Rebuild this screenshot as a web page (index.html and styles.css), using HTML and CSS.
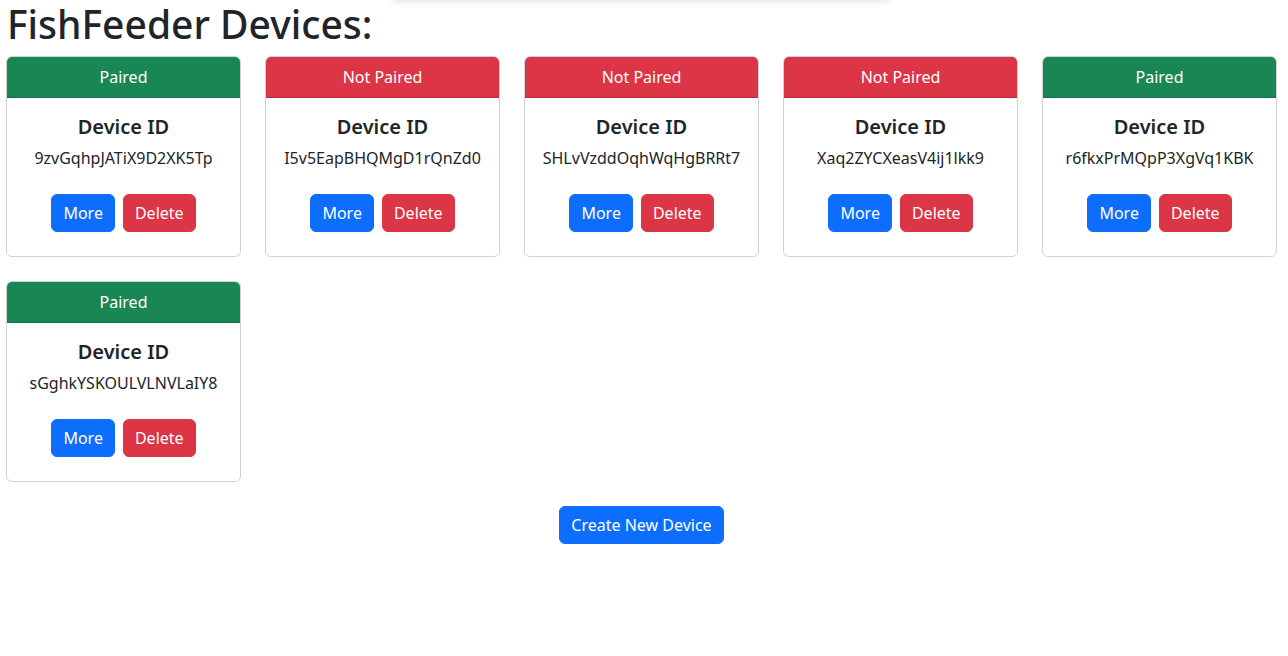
FILE: index.html
```html
<!DOCTYPE html>
<html>
<head>
<meta charset="utf-8">
<link rel="stylesheet" href="styles.css">
</head>
<body>
<div class="topshade"></div>
<div class="page">
  <h1 class="title">FishFeeder Devices:</h1>
  <div class="grid">
    <div class="card"><div class="card-header paired">Paired</div><div class="card-body"><h5 class="card-title">Device ID</h5><p class="card-text">9zvGqhpJATiX9D2XK5Tp</p><div class="actions"><button class="btn btn-blue">More</button><button class="btn btn-red">Delete</button></div></div></div>
    <div class="card"><div class="card-header notpaired">Not Paired</div><div class="card-body"><h5 class="card-title">Device ID</h5><p class="card-text">I5v5EapBHQMgD1rQnZd0</p><div class="actions"><button class="btn btn-blue">More</button><button class="btn btn-red">Delete</button></div></div></div>
    <div class="card"><div class="card-header notpaired">Not Paired</div><div class="card-body"><h5 class="card-title">Device ID</h5><p class="card-text">SHLvVzddOqhWqHgBRRt7</p><div class="actions"><button class="btn btn-blue">More</button><button class="btn btn-red">Delete</button></div></div></div>
    <div class="card"><div class="card-header notpaired">Not Paired</div><div class="card-body"><h5 class="card-title">Device ID</h5><p class="card-text">Xaq2ZYCXeasV4ij1lkk9</p><div class="actions"><button class="btn btn-blue">More</button><button class="btn btn-red">Delete</button></div></div></div>
    <div class="card"><div class="card-header paired">Paired</div><div class="card-body"><h5 class="card-title">Device ID</h5><p class="card-text">r6fkxPrMQpP3XgVq1KBK</p><div class="actions"><button class="btn btn-blue">More</button><button class="btn btn-red">Delete</button></div></div></div>
    <div class="card"><div class="card-header paired">Paired</div><div class="card-body"><h5 class="card-title">Device ID</h5><p class="card-text">sGghkYSKOULVLNVLaIY8</p><div class="actions"><button class="btn btn-blue">More</button><button class="btn btn-red">Delete</button></div></div></div>
  </div>
  <div class="create"><button class="btn btn-blue">Create New Device</button></div>
</div>
</body>
</html>
```
FILE: styles.css
```css
* { box-sizing: border-box; }
html, body { margin: 0; padding: 0; background: #fff; }
body {
  font-family: "Noto Sans", "Open Sans", sans-serif;
  font-size: 16px;
  line-height: 24px;
  color: #212529;
}
.topshade {
  position: absolute;
  left: 392px;
  top: -20px;
  width: 498px;
  height: 20px;
  box-shadow: 0 2px 6px rgba(0,0,0,0.10);
}
.page { padding: 0 11px 0 6px; }
.title {
  margin: 0 0 8px 0;
  font-size: 39px;
  line-height: 48px;
  font-weight: 500;
  padding-left: 1px;
}
.grid {
  display: grid;
  grid-template-columns: repeat(5, 235px);
  column-gap: 24px;
  row-gap: 24px;
}
.card {
  border: 1px solid rgba(0,0,0,0.175);
  border-radius: 6px;
  overflow: hidden;
  text-align: center;
}
.card-header {
  padding: 8px 16px;
  color: #fff;
  border-bottom: 1px solid rgba(0,0,0,0.175);
}
.paired { background: #198754; }
.notpaired { background: #dc3545; }
.card-body { padding: 17px 16px 24px; }
.card-title {
  margin: 0 0 7px 0;
  font-size: 20px;
  line-height: 24px;
  font-weight: 600;
}
.card-text { margin: 0 0 24px 0; }
.actions { display: flex; justify-content: center; gap: 8px; }
.btn {
  font-family: inherit;
  font-size: 16px;
  line-height: 24px;
  padding: 6px 11px;
  border: 1px solid transparent;
  border-radius: 6px;
  color: #fff;
  cursor: pointer;
}
.btn-blue { background: #0d6efd; border-color: #0d6efd; }
.btn-red { background: #dc3545; border-color: #dc3545; }
.create {
  display: flex;
  justify-content: center;
  margin-top: 24px;
}
```
